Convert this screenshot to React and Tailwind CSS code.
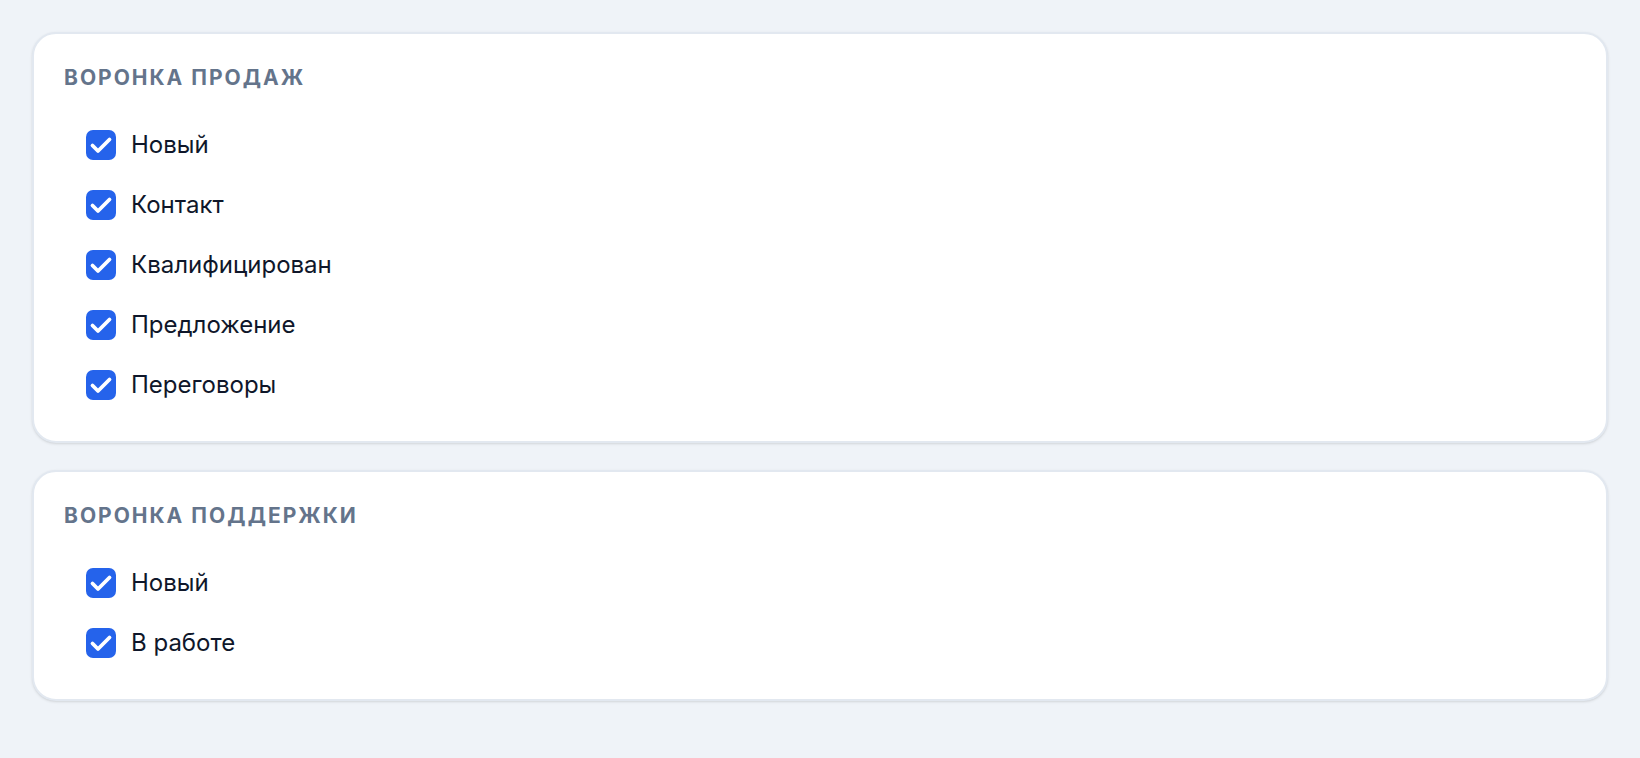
const FUNNELS = [
  { title: 'Воронка продаж', stages: ['Новый', 'Контакт', 'Квалифицирован', 'Предложение', 'Переговоры'] },
  { title: 'Воронка поддержки', stages: ['Новый', 'В работе'] },
];

function CheckBox() {
  return (
    <span className="flex items-center justify-center w-[30px] h-[30px] rounded-[7px] bg-[#2563eb] shrink-0">
      <svg viewBox="0 0 30 30" className="w-[30px] h-[30px]" fill="none" stroke="white" strokeWidth="3.8" strokeLinecap="round" strokeLinejoin="round">
        <path d="M6.5 15.5 12 21 23.5 9.5" />
      </svg>
    </span>
  );
}

function FunnelCard({ title, stages }) {
  return (
    <div className="bg-white border-2 border-[#e2e8f0] rounded-[24px] p-[30px] shadow-sm">
      <h2 className="text-[21px] leading-[28px] font-bold uppercase tracking-[0.095em] text-[#64748b]">{title}</h2>
      <div className="mt-[27px] flex flex-col gap-2">
        {stages.map((s) => (
          <label key={s} className="flex items-center gap-[15px] h-[52px] px-[22px] cursor-pointer">
            <CheckBox />
            <span className="text-[24px] text-[#0f172a]">{s}</span>
          </label>
        ))}
      </div>
    </div>
  );
}

export default function App() {
  return (
    <div className="min-h-screen bg-[#eff3f8] p-8 flex flex-col gap-[27px]" style={{ fontFamily: 'Inter, "Noto Sans", sans-serif' }}>
      {FUNNELS.map((f) => <FunnelCard key={f.title} {...f} />)}
    </div>
  );
}
